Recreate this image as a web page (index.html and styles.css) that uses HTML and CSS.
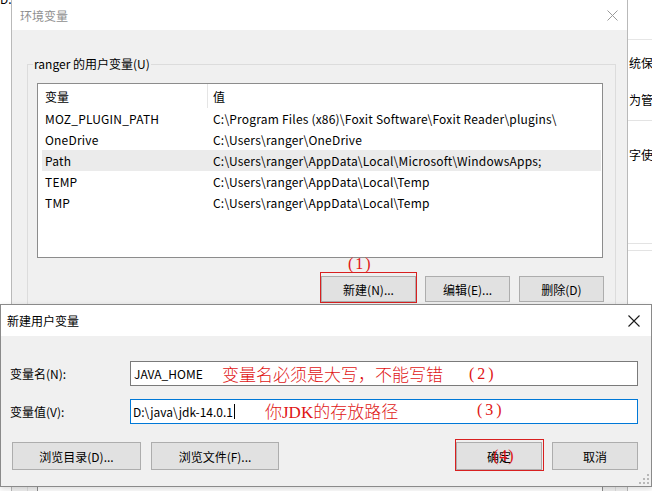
FILE: index.html
```html
<!DOCTYPE html>
<html lang="zh-CN">
<head>
<meta charset="utf-8">
<title>新建用户变量</title>
<link rel="stylesheet" href="styles.css">
</head>
<body>
<div class="desk">
  <div class="corner-text">D.</div>

  <div class="win-right">
    <div class="wr-top"></div>
    <div class="wr-text t1">统保护</div>
    <div class="wr-text t2">为管理</div>
    <div class="wr-text t3">字使用</div>
    <div class="wr-line l2"></div>
    <div class="wr-line l3"></div>
    <div class="wr-line l4"></div>
  </div>

  <div class="win-env">
    <div class="env-title">
      <span class="env-title-text">环境变量</span>
      <svg class="env-close" width="11" height="11" viewBox="0 0 11 11"><path d="M0.5 0.5L10.5 10.5M10.5 0.5L0.5 10.5" stroke="#9a9a9a" stroke-width="1" fill="none"/></svg>
    </div>
    <div class="env-body">
      <div class="group">
        <span class="group-label">ranger 的用户变量(U)</span>
        <div class="list">
          <div class="list-head">
            <div class="lh-c1">变量</div>
            <div class="lh-c2">值</div>
          </div>
          <div class="row"><div class="c1">MOZ_PLUGIN_PATH</div><div class="c2">C:\Program Files (x86)\Foxit Software\Foxit Reader\plugins\</div></div>
          <div class="row"><div class="c1">OneDrive</div><div class="c2">C:\Users\ranger\OneDrive</div></div>
          <div class="row sel"><div class="c1">Path</div><div class="c2">C:\Users\ranger\AppData\Local\Microsoft\WindowsApps;</div></div>
          <div class="row"><div class="c1">TEMP</div><div class="c2">C:\Users\ranger\AppData\Local\Temp</div></div>
          <div class="row"><div class="c1">TMP</div><div class="c2">C:\Users\ranger\AppData\Local\Temp</div></div>
        </div>
        <div class="env-buttons">
          <div class="btn-wrap marked m1">
            <span class="anno a1">(1)</span>
            <button class="btn b-new">新建(N)...</button>
          </div>
          <button class="btn b-edit">编辑(E)...</button>
          <button class="btn b-del">删除(D)</button>
        </div>
      </div>
      <div class="group group2">
        <span class="group-label">系统变量(S)</span>
        <div class="list list2"></div>
      </div>
    </div>
  </div>

  <div class="dlg">
    <div class="dlg-title">
      <span>新建用户变量</span>
      <svg class="dlg-close" width="12" height="12" viewBox="0 0 12 12"><path d="M0.5 0.5L11.5 11.5M11.5 0.5L0.5 11.5" stroke="#1a1a1a" stroke-width="1.1" fill="none"/></svg>
    </div>
    <div class="dlg-body">
      <div class="form">
        <label class="flabel">变量名(N):</label>
        <div class="field">
          <div class="input">JAVA_HOME</div>
          <span class="anno a2">变量名必须是大写，不能写错</span>
          <span class="anno a2n">(2)</span>
        </div>
        <label class="flabel">变量值(V):</label>
        <div class="field">
          <div class="input focus">D:\java\jdk-14.0.1<span class="caret"></span></div>
          <span class="anno a3">你<span class="lat">JDK</span>的存放路径</span>
          <span class="anno a3n">(3)</span>
        </div>
      </div>
      <div class="dlg-buttons">
        <div class="left-btns">
          <button class="btn b-wide">浏览目录(D)...</button>
          <button class="btn b-wide2">浏览文件(F)...</button>
        </div>
        <div class="right-btns">
          <div class="btn-wrap marked m2">
            <button class="btn b-ok">确定</button>
            <span class="anno a4">(4)</span>
          </div>
          <button class="btn b-cancel">取消</button>
        </div>
      </div>
      <svg class="grip" width="10" height="10" viewBox="0 0 10 10">
        <rect x="8" y="0" width="2" height="2" fill="#b8b8b8"/>
        <rect x="4" y="4" width="2" height="2" fill="#b8b8b8"/>
        <rect x="8" y="4" width="2" height="2" fill="#b8b8b8"/>
        <rect x="0" y="8" width="2" height="2" fill="#b8b8b8"/>
        <rect x="4" y="8" width="2" height="2" fill="#b8b8b8"/>
        <rect x="8" y="8" width="2" height="2" fill="#b8b8b8"/>
      </svg>
    </div>
  </div>
</div>
</body>
</html>
```
FILE: styles.css
```css
* { box-sizing: border-box; }
html, body {
  margin: 0;
  padding: 0;
}
body {
  width: 652px;
  height: 491px;
  overflow: hidden;
  background: #ffffff;
  font-family: "Noto Sans CJK SC", "Noto Sans", sans-serif;
  font-size: 12px;
  color: #000;
}
.desk {
  position: relative;
  width: 652px;
  height: 491px;
  overflow: hidden;
}
.corner-text {
  position: absolute;
  left: 0;
  top: -9px;
  font-size: 12px;
  line-height: 16px;
}

/* right background window */
.win-right {
  position: absolute;
  left: 627px;
  top: 0;
  width: 60px;
  height: 491px;
  background: #ffffff;
  border-left: 1px solid #d8d8d8;
  overflow: hidden;
}
.wr-top {
  height: 40px;
  background: #ffffff;
  border-bottom: 1px solid #e6e6e6;
}
.wr-line {
  position: absolute;
  left: 0;
  right: 0;
  height: 1px;
  background: #e3e3e3;
}
.wr-line.l2 { top: 120px; }
.wr-line.l3 { top: 243px; }
.wr-line.l4 { top: 250px; }
.wr-text {
  position: absolute;
  left: 1px;
  white-space: nowrap;
  line-height: 16px;
}
.wr-text.t1 { top: 55px; }
.wr-text.t2 { top: 92px; }
.wr-text.t3 { top: 147px; }

/* env window */
.win-env {
  position: absolute;
  left: 11px;
  top: 0;
  width: 617px;
  height: 560px;
  border-left: 1px solid #b9b9b9;
  border-right: 1px solid #b9b9b9;
  background: #f0f0f0;
  display: flex;
  flex-direction: column;
}
.env-title {
  height: 30px;
  background: #ffffff;
  display: flex;
  align-items: center;
  justify-content: space-between;
  padding: 0 9px 0 8px;
  flex: none;
}
.env-title-text {
  color: #8f8f8f;
  font-size: 12px;
}
.env-close { display: block; }
.env-body {
  padding: 34px 11px 0 15px;
}
.group {
  position: relative;
  border: 1px solid #dcdcdc;
  padding: 18px 12px 12px 9px;
}
.group-label {
  position: absolute;
  left: 5px;
  top: -9px;
  line-height: 16px;
  padding: 0 1px;
  background: #f0f0f0;
  white-space: nowrap;
}
.list {
  height: 175px;
  background: #ffffff;
  border: 1px solid #8c8c8c;
}
.list-head {
  display: flex;
  height: 24px;
  align-items: stretch;
}
.lh-c1 {
  width: 170px;
  padding-left: 7px;
  border-right: 1px solid #e5e5e5;
  display: flex;
  align-items: center;
}
.lh-c2 {
  padding-left: 5px;
  display: flex;
  align-items: center;
}
.row {
  display: grid;
  grid-template-columns: 168px 1fr;
  height: 21px;
  align-items: center;
  margin: 0 1px 0 4px;
  white-space: nowrap;
  letter-spacing: 0.2px;
}
.row .c1 { padding-left: 3px; }
.row .c2 { padding-left: 3px; }
.row.sel { background: #ebebeb; }

.env-buttons {
  display: flex;
  justify-content: flex-end;
  gap: 9px;
  margin-top: 18px;
  margin-right: -1px;
}
.btn {
  font-family: "Noto Sans CJK SC", "Noto Sans", sans-serif;
  font-size: 12px;
  color: #000;
  background: #e1e1e1;
  border: 1px solid #adadad;
  height: 26px;
  padding: 0;
  margin: 0;
  display: flex;
  align-items: center;
  justify-content: center;
}
.b-new { width: 95px; }
.b-edit, .b-del { width: 85px; }

.btn-wrap { position: relative; display: flex; }
.marked::after {
  content: "";
  position: absolute;
  border: 1px solid #d82020;
  pointer-events: none;
}
.m1::after { left: -1px; right: -1px; top: -4px; bottom: -1px; }
.m2::after { left: -1px; right: -2px; top: -3px; bottom: -1px; }

.anno {
  position: absolute;
  color: #e01515;
  font-family: "Noto Sans CJK SC", sans-serif;
  font-weight: 300;
  white-space: nowrap;
  pointer-events: none;
}
.a1 {
  left: 27px;
  top: -21px;
  font-family: "Liberation Serif", serif;
  font-size: 16px;
  letter-spacing: 2px;
  line-height: 18px;
}

.group2 {
  margin-top: 30px;
  padding-top: 18px;
}
.list2 { height: 200px; }

/* new variable dialog */
.dlg {
  position: absolute;
  left: 0;
  top: 304px;
  width: 652px;
  height: 183px;
  border: 1px solid #8a8a8a;
  background: #f0f0f0;
  display: flex;
  flex-direction: column;
  box-shadow: 0 2px 6px rgba(0,0,0,0.15);
}
.dlg-title {
  height: 31px;
  background: #ffffff;
  display: flex;
  align-items: center;
  justify-content: space-between;
  padding: 0 11px 0 6px;
  flex: none;
}
.dlg-close { display: block; }
.dlg-body {
  position: relative;
  flex: 1;
  padding: 25px 13px 0 9px;
}
.form {
  display: grid;
  grid-template-columns: 120px 1fr;
  row-gap: 13px;
  align-items: center;
}
.flabel { white-space: nowrap; }
.field { position: relative; }
.input {
  height: 25px;
  background: #ffffff;
  border: 1px solid #7a7a7a;
  display: flex;
  align-items: center;
  padding-left: 3px;
  white-space: nowrap;
}
.input.focus { border-color: #0078d7; padding-left: 2px; }
.caret {
  display: inline-block;
  width: 1px;
  height: 15px;
  background: #000;
  margin-left: 1px;
}
.a2 {
  left: 92px;
  top: 2px;
  font-size: 17px;
  line-height: 22px;
}
.a2n {
  left: 339px;
  top: 3px;
  font-family: "Liberation Serif", serif;
  font-size: 16px;
  line-height: 20px;
  letter-spacing: 3px;
  font-weight: 400;
}
.a3 {
  left: 135px;
  top: 1px;
  font-size: 17px;
  line-height: 22px;
}
.a3 .lat { font-family: "Liberation Serif", serif; font-weight: 400; }
.a3n {
  left: 347px;
  top: 1px;
  font-family: "Liberation Serif", serif;
  font-size: 16px;
  line-height: 20px;
  letter-spacing: 3px;
  font-weight: 400;
}
.dlg-buttons {
  display: flex;
  justify-content: space-between;
  margin-top: 18px;
  padding-left: 2px;
  padding-right: 0;
}
.left-btns, .right-btns { display: flex; gap: 10px; }
.dlg-buttons .btn { height: 28px; }
.b-wide { width: 129px; }
.b-wide2 { width: 128px; }
.b-ok { width: 86px; }
.b-cancel { width: 86px; }
.a4 {
  left: 37px;
  top: 5px;
  font-family: "Liberation Serif", serif;
  font-size: 16px;
  line-height: 18px;
  font-weight: 400;
  letter-spacing: 1px;
}
.grip {
  position: absolute;
  right: 2px;
  bottom: 2px;
}
```
